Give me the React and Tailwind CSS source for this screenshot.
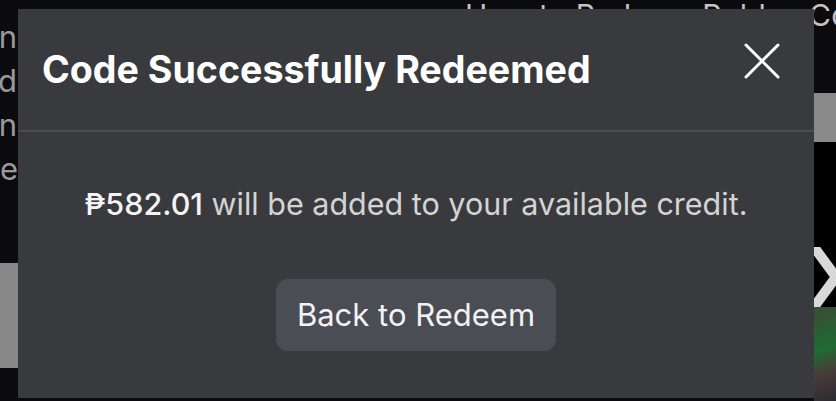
import React from 'react';

const font = { fontFamily: 'Inter, "Noto Sans", "DejaVu Sans", sans-serif' };

const CloseIcon = () => (
  <svg width="36" height="36" viewBox="0 0 36 36" fill="none">
    <path d="M2 2L34 34M34 2L2 34" stroke="white" strokeWidth="3" strokeLinecap="round" />
  </svg>
);

const Backdrop = () => (
  <div className="flex h-full">
    {/* left column, clipped by the modal */}
    <div className="w-[22px] shrink-0 flex flex-col items-end overflow-hidden text-[31px] leading-[44px] text-[#9a9a9a]">
      <div className="mt-[15px] mr-[5px] whitespace-nowrap">Screen</div>
      <div className="mr-[5px] whitespace-nowrap">and</div>
      <div className="mr-[5px] whitespace-nowrap">in</div>
      <div className="mr-[4px] whitespace-nowrap">the</div>
      <div className="mt-[72px] h-[105px] w-full bg-[#888888]" />
    </div>

    <div className="flex-1 min-w-0 flex flex-col">
      <div className="pl-[443px] h-[30px] overflow-hidden whitespace-nowrap text-[30px] leading-[30px] tracking-[0.3px] text-[#c4c4c4]">
        How to Redeem Roblox Codes
      </div>
      <div className="flex-1 flex justify-end">
        <div className="w-[22px] flex flex-col">
          <div className="h-[63px]" />
          <div className="h-[49px] bg-[#8a8a8a]" />
          <div className="h-[105px] bg-black" />
          <div className="flex-1 bg-[#1b1d1a] flex flex-col">
            <svg width="22" height="60" viewBox="0 0 22 60">
              <rect width="22" height="60" fill="#000" />
              <path d="M0 0L22 30L0 60" stroke="#d8d8d8" strokeWidth="10" fill="none" />
            </svg>
            <div className="flex-1 bg-[linear-gradient(160deg,#3b4a36,#1f6b32_45%,#4a3a3a_70%,#2b2b2f)]" />
          </div>
        </div>
      </div>
    </div>
  </div>
);

export default function App() {
  return (
    <div className="relative w-[836px] h-[401px] overflow-hidden bg-[#0b0b0d]" style={font}>
      <Backdrop />

      <div className="absolute left-[18px] top-[9px] w-[796px] h-[389px] bg-[#393a3d] flex flex-col">
        <div className="h-[123px] shrink-0 flex items-center justify-between pl-[24px] pr-[34px] border-b-2 border-[#4b4c53]">
          <h1 className="text-[37.6px] font-bold text-white leading-none">Code Successfully Redeemed</h1>
          <button className="self-start mt-[34px]">
            <CloseIcon />
          </button>
        </div>

        <div className="flex-1 flex flex-col items-center pt-[54px]">
          <p className="text-[30.5px] leading-[36px] text-[#d4d4d4] whitespace-nowrap">
            <span className="font-medium text-[#f4f4f4]">₱582.01</span> will be added to your available credit.
          </p>
          <button className="mt-[57px] w-[280px] h-[72px] rounded-[12px] bg-[#4b4d54] text-[31px] text-[#f2f2f2]">
            Back to Redeem
          </button>
        </div>
      </div>
    </div>
  );
}
